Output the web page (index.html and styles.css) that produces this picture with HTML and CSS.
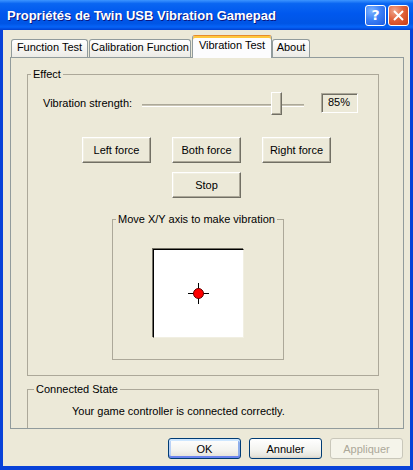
FILE: index.html
```html
<!DOCTYPE html>
<html lang="fr">
<head>
    <meta charset="UTF-8">
    <meta name="viewport" content="width=device-width, initial-scale=1.0">
    <title>Propriétés de Twin USB Vibration Gamepad</title>
    <link rel="stylesheet" href="styles.css">
</head>
<body>
    <div class="window">
        <div class="titlebar">
            <span class="title">Propriétés de Twin USB Vibration Gamepad</span>
            <div class="caption-buttons">
                <span class="cap-btn cap-help">?</span>
                <span class="cap-btn cap-close">
                    <svg width="11" height="11" viewBox="0 0 11 11">
                        <path d="M1 1 L10 10 M10 1 L1 10" stroke="#fff" stroke-width="2" fill="none"/>
                    </svg>
                </span>
            </div>
        </div>

        <div class="client">
            <div class="tabs">
                <span class="tab tab-function">Function Test</span>
                <span class="tab tab-calibration">Calibration Function</span>
                <span class="tab tab-vibration active">Vibration Test</span>
                <span class="tab tab-about">About</span>
            </div>

            <div class="panel">
                <fieldset class="group effect">
                    <legend>Effect</legend>
                    <div class="effect-body">
                        <div class="strength-row">
                            <span class="strength-label">Vibration strength:</span>
                            <div class="slider">
                                <div class="track track-left"></div>
                                <div class="thumb"></div>
                                <div class="track track-right"></div>
                            </div>
                            <span class="strength-value">85%</span>
                        </div>

                        <div class="force-row">
                            <button class="classic-btn">Left force</button>
                            <button class="classic-btn">Both force</button>
                            <button class="classic-btn">Right force</button>
                        </div>

                        <div class="stop-row">
                            <button class="classic-btn">Stop</button>
                        </div>

                        <fieldset class="group axis">
                            <legend>Move X/Y axis to make vibration</legend>
                            <div class="axis-body">
                                <div class="pad">
                                    <svg width="21" height="21" viewBox="0 0 21 21">
                                        <path d="M10.5 0 V21 M0 10.5 H21" stroke="#000" stroke-width="1"/>
                                        <circle cx="10.5" cy="10.5" r="5" fill="#f00" stroke="#600" stroke-width="1"/>
                                    </svg>
                                </div>
                            </div>
                        </fieldset>
                    </div>
                </fieldset>

                <fieldset class="group state">
                    <legend>Connected State</legend>
                    <p class="state-text">Your game controller is connected correctly.</p>
                </fieldset>
            </div>

            <div class="dialog-buttons">
                <button class="xp-btn default">OK</button>
                <button class="xp-btn">Annuler</button>
                <button class="xp-btn" disabled>Appliquer</button>
            </div>
        </div>
    </div>
</body>
</html>
```

FILE: styles.css
```css
*{
    margin: 0px;
    padding: 0px;
    box-sizing: border-box;
}

body{
    font-family: "Liberation Sans", Arial, sans-serif;
    font-size: 11px;
    background-color: #FFF;
}

.window{
    width: 413px;
    height: 470px;
    display: flex;
    flex-direction: column;
}

/* title bar */

.titlebar{
    flex: 0 0 30px;
    display: flex;
    justify-content: space-between;
    align-items: center;
    padding: 0px 4px 0px 7px;
    background: linear-gradient(#3D95FF 0%, #0A66F2 12%, #0058EE 45%, #0055E5 78%, #0664F8 90%, #0040D0 100%);
}

.title{
    color: #FFF;
    font-weight: bold;
    font-size: 13px;
    text-shadow: 1px 1px 0px #0A1883;
    padding-top: 1px;
}

.caption-buttons{
    display: flex;
    gap: 2px;
}

.cap-btn{
    width: 21px;
    height: 21px;
    border: 1px solid #FFF;
    border-radius: 3px;
    display: flex;
    justify-content: center;
    align-items: center;
    color: #FFF;
}

.cap-help{
    background: radial-gradient(circle at 30% 25%, #7EB4FF 0%, #3E82F7 45%, #1C5AE0 100%);
    font-family: "DejaVu Sans", sans-serif;
    font-weight: bold;
    font-size: 14px;
}

.cap-close{
    background: radial-gradient(circle at 30% 25%, #F0A78D 0%, #E1633C 45%, #C83A12 100%);
}

/* client area */

.client{
    flex: 1;
    display: flex;
    flex-direction: column;
    background-color: #ECE9D8;
    border: 0px solid #0842D8;
    border-width: 0px 3px 4px 3px;
}

.tabs{
    display: flex;
    align-items: flex-end;
    height: 22px;
    margin-top: 5px;
    padding-left: 8px;
}

.tab{
    height: 18px;
    margin-right: 1px;
    padding-top: 1px;
    line-height: 13px;
    text-align: center;
    white-space: nowrap;
    border: 1px solid #919B9C;
    border-bottom: none;
    border-radius: 3px 3px 0px 0px;
    background: linear-gradient(#FFFFFF, #ECEBE6);
}

.tab-function{ width: 77px; }
.tab-calibration{ width: 102px; }
.tab-vibration{ width: 80px; }
.tab-about{ width: 38px; }

.tab.active{
    position: relative;
    z-index: 1;
    height: 23px;
    margin-right: 0px;
    margin-bottom: -1px;
    padding-top: 3px;
    border-top-color: #E68B2C;
    background: #FCFCFE;
    box-shadow: inset 0px 2px 0px #FFC73C;
}

.panel{
    width: 394px;
    height: 372px;
    margin-left: 7px;
    padding-left: 16px;
    border: 1px solid #919B9C;
    overflow: hidden;
    background-color: #ECE9D8;
}

/* group boxes */

.group{
    border: 1px solid #ACA899;
    padding: 0px;
    min-width: 0px;
}

.group legend{
    margin-left: 3px;
    padding: 0px 2px;
    line-height: 13px;
}

.effect{
    width: 352px;
    margin-top: 10px;
}

.effect-body{
    padding: 12px 0px 15px 15px;
}

.strength-row{
    display: flex;
    align-items: flex-start;
    height: 24px;
}

.strength-label{
    width: 99px;
    margin-top: 4px;
    line-height: 13px;
}

.slider{
    width: 162px;
    display: flex;
    align-items: flex-start;
}

.track{
    height: 3px;
    margin-top: 11px;
    border-top: 1px solid #ACA899;
    border-bottom: 1px solid #FFF;
    background-color: #C8C4B4;
}

.track-left{ width: 129px; }
.track-right{ width: 22px; }

.thumb{
    width: 11px;
    height: 23px;
    margin-top: -1px;
    background-color: #ECE9D8;
    border: 1px solid;
    border-color: #FFF #716F64 #716F64 #FFF;
    box-shadow: inset -1px -1px 0px #ACA899;
}

.strength-value{
    width: 37px;
    height: 20px;
    margin-left: 17px;
    padding-left: 6px;
    line-height: 17px;
    border: 1px solid;
    border-color: #ACA899 #FFF #FFF #ACA899;
    box-shadow: inset 1px 1px 0px #716F64;
}

.force-row{
    display: flex;
    gap: 21px;
    margin-top: 20px;
    padding-left: 39px;
}

.stop-row{
    margin-top: 9px;
    padding-left: 129px;
}

.classic-btn{
    width: 69px;
    height: 26px;
    font-family: inherit;
    font-size: 11px;
    color: #000;
    background-color: #ECE9D8;
    border: 1px solid;
    border-color: #FFF #716F64 #716F64 #FFF;
    box-shadow: inset -1px -1px 0px #ACA899, inset 1px 1px 0px #F1EFE2;
}

.axis{
    width: 172px;
    height: 147px;
    margin-top: 15px;
    margin-left: 69px;
}

.axis-body{
    padding-top: 23px;
}

.pad{
    width: 91px;
    height: 89px;
    margin: 0px auto;
    display: flex;
    justify-content: center;
    align-items: center;
    background-color: #FFF;
    border: 1px solid;
    border-color: #000 #F1EFE2 #F1EFE2 #000;
    box-shadow: -1px -1px 0px #716F64;
}

.state{
    width: 352px;
    height: 60px;
    margin-top: 7px;
}

.state legend{
    margin-left: 6px;
}

.state-text{
    padding: 9px 0px 0px 44px;
    line-height: 13px;
}

/* dialog buttons */

.dialog-buttons{
    display: flex;
    justify-content: flex-end;
    gap: 8px;
    margin-top: 9px;
    padding-right: 7px;
}

.xp-btn{
    width: 73px;
    height: 21px;
    font-family: inherit;
    font-size: 11px;
    color: #000;
    border: 1px solid #003C74;
    border-radius: 3px;
    background: linear-gradient(#FFFFFF 0%, #F3F3EF 60%, #E6E4DC 90%, #D6D0C5 100%);
}

.xp-btn.default{
    box-shadow: inset 0px 2px 0px #CEE7FF, inset 0px -2px 0px #6982EE, inset 2px 0px 0px #B9D1F6, inset -2px 0px 0px #8EAEEB;
}

.xp-btn:disabled{
    color: #ACA899;
    border-color: #C9C7BA;
    background: #F5F4EA;
}
```
